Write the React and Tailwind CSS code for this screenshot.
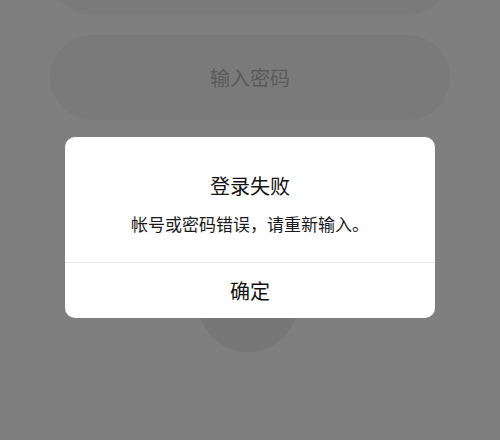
// Login-failed alert shown over a dimmed login screen
const App = () => {
  return (
    <div
      className="relative h-[440px] w-[500px] overflow-hidden bg-[#7f7f7f]"
      style={{ fontFamily: '"Noto Sans CJK SC", "Noto Sans", sans-serif' }}
    >
      <div className="flex flex-col">
        <div className="mx-[50px] mt-[-70px] h-[85px] rounded-full bg-[#7a7a7a]" />
        <div className="mx-[50px] mt-[20px] flex h-[85px] items-center justify-center rounded-full bg-[#7a7a7a]">
          <span className="text-[20px] leading-7 text-[#5a5a5a]">输入密码</span>
        </div>
        <div className="ml-[198px] mt-[132px] h-[100px] w-[100px] rounded-full bg-[#777777]" />
      </div>

      <div className="absolute left-[65px] top-[137px] w-[370px] overflow-hidden rounded-[10px] bg-white">
        <div className="flex flex-col items-center pb-[26px] pt-[35px]">
          <h3 className="text-[20px] font-normal leading-7 text-[#111111]">登录失败</h3>
          <p className="mt-[12px] text-[17px] leading-6 text-[#1a1a1a]">帐号或密码错误，请重新输入。</p>
        </div>
        <div className="flex h-[56px] items-center justify-center border-t border-[#e6e6e6]">
          <span className="text-[20px] leading-7 text-[#111111]">确定</span>
        </div>
      </div>
    </div>
  );
};

export default App;
